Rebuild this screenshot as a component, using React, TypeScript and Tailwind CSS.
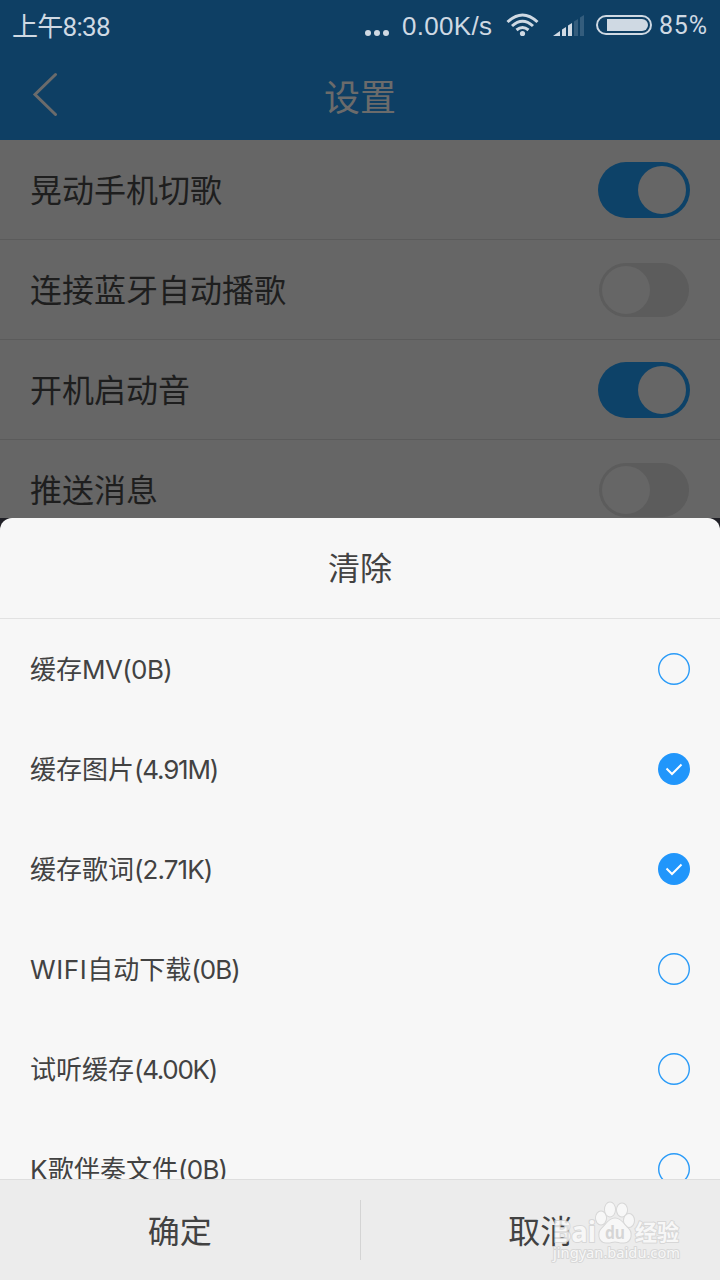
import React, { useState } from "react";

const settings = [
  { label: "晃动手机切歌", on: true },
  { label: "连接蓝牙自动播歌", on: false },
  { label: "开机启动音", on: true },
  { label: "推送消息", on: false },
];

// Latin runs are kept apart from the Chinese ones so they can be tracked on their own
const cacheItems = [
  { id: "mv", parts: ["", "缓存", "MV(0B)"], tracking: "tracking-[-0.6px]", checked: false },
  { id: "image", parts: ["", "缓存图片", "(4.91M)"], tracking: "tracking-[-1.2px]", checked: true },
  { id: "lyric", parts: ["", "缓存歌词", "(2.71K)"], tracking: "tracking-[-0.9px]", checked: true },
  { id: "wifi", parts: ["WIFI", "自动下载", "(0B)"], tracking: "tracking-[-1px]", checked: false },
  { id: "listen", parts: ["", "试听缓存", "(4.00K)"], tracking: "tracking-[-1.3px]", checked: false },
  { id: "karaoke", parts: ["K", "歌伴奏文件", "(0B)"], tracking: "tracking-[-0.8px]", checked: false },
];

function StatusBar() {
  return (
    <div className="flex h-[50px] items-center text-[26px] leading-[50px] text-[#cfd9e3]">
      <span className="ml-3 flex-1 whitespace-nowrap pt-[3px] font-['Roboto','Noto_Sans_CJK_SC',sans-serif] text-[26px] tracking-[-0.7px]">上午8:38</span>
      <svg className="mr-[13px] mt-4" width="24" height="8" viewBox="0 0 24 8" fill="currentColor">
        <circle cx="3" cy="4" r="3" />
        <circle cx="12" cy="4" r="3" />
        <circle cx="21" cy="4" r="3" />
      </svg>
      <span className="w-[91px] whitespace-nowrap pt-0.5 font-['Liberation_Sans',sans-serif] tracking-[0.3px]">0.00K/s</span>
      <svg className="ml-[13px]" width="33" height="24" viewBox="0 0 33 24" fill="none" stroke="currentColor" strokeWidth="3">
        <path d="M1.5 9 Q16.5 -5 31.5 9" />
        <path d="M6 13 Q16.5 3.5 27 13" />
        <path d="M10.5 17 Q16.5 12 22.5 17" />
        <circle cx="16.5" cy="20.5" r="2.6" fill="currentColor" stroke="none" />
      </svg>
      <svg className="ml-[14px] mt-0.5" width="32" height="22" viewBox="0 0 32 22" fill="currentColor">
        <path d="M0 21 L7 16 V21 Z" />
        <path d="M9 14.5 L13 12 V21 H9 Z" />
        <path d="M15 10.5 L19 8 V21 H15 Z" />
        <path d="M21 6.5 L25 4 V21 H21 Z" opacity="0.2" />
        <path d="M27 2.5 L31 0 V21 H27 Z" opacity="0.2" />
      </svg>
      <svg className="ml-[11px]" width="56" height="20" viewBox="0 0 56 20">
        <rect x="1" y="1" width="54" height="18" rx="9" fill="none" stroke="currentColor" strokeWidth="2" />
        <path d="M11 4 H46 A6 6 0 0 1 46 16 H11 Z" fill="currentColor" />
      </svg>
      <span className="ml-[7px] w-[61px] whitespace-nowrap pt-0.5 font-['Roboto',sans-serif] text-[25px] tracking-[0.8px]">85%</span>
    </div>
  );
}

function Toggle({ on }: { on: boolean }) {
  if (on) {
    return (
      <div className="flex h-14 w-[92px] items-center justify-end rounded-full bg-[#0d4268] pr-1">
        <div className="h-12 w-12 rounded-full bg-[#666]" />
      </div>
    );
  }
  return (
    <div className="mr-px flex h-[54px] w-[90px] items-center rounded-full bg-[#5c5c5c] pl-[3px]">
      <div className="h-12 w-12 rounded-full bg-[#666]" />
    </div>
  );
}

function RadioMark({ checked }: { checked: boolean }) {
  return (
    <svg width="32" height="32" viewBox="0 0 32 32" fill="none">
      {checked ? (
        <>
          <circle cx="16" cy="16" r="16" fill="#2196fb" />
          <path d="M8.5 15.5 L14 21 L23.5 11.5" stroke="#fff" strokeWidth="2" />
        </>
      ) : (
        <circle cx="16" cy="16" r="15.3" stroke="#2a9bf8" strokeWidth="1.4" />
      )}
    </svg>
  );
}

function Watermark() {
  return (
    <svg
      className="pointer-events-none absolute right-[36px] top-[20px]"
      width="134"
      height="66"
      viewBox="0 0 134 66"
      fill="#fafafa"
      stroke="#d4d4d4"
      strokeWidth="2"
      strokeLinejoin="round"
      opacity="0.85"
      paintOrder="stroke"
      fontFamily="'Noto Sans', 'Noto Sans CJK SC', sans-serif"
    >
      <text x="3" y="42" fontSize="28" fontWeight="700" textLength="43" lengthAdjust="spacingAndGlyphs">Bai</text>
      <ellipse cx="51" cy="18" rx="5" ry="6.5" />
      <ellipse cx="60" cy="9.5" rx="5" ry="7" />
      <ellipse cx="72" cy="10" rx="5" ry="6.5" />
      <ellipse cx="79" cy="20.5" rx="5" ry="6.5" />
      <path d="M65 18.5 C59 18.5 57 24 52 28.5 C48 32 48 42 56 42.5 C60 43 62 41.5 65 41.5 C68 41.5 70 43 74 42.5 C82 42 82 32 78 28.5 C73 24 71 18.5 65 18.5 Z" />
      <text x="55" y="39" fontSize="18" fontWeight="700" fill="#d2d2d2" stroke="none" textLength="20" lengthAdjust="spacingAndGlyphs">du</text>
      <text x="85" y="39.5" fontSize="22" fontWeight="700" textLength="44" lengthAdjust="spacingAndGlyphs">经验</text>
      <text x="3" y="58" fontSize="14" textLength="127" lengthAdjust="spacingAndGlyphs">jingyan.baidu.com</text>
    </svg>
  );
}

export default function App() {
  const [items, setItems] = useState(cacheItems);

  const toggleItem = (id: string) => {
    setItems(items.map((item) => (item.id === id ? { ...item, checked: !item.checked } : item)));
  };

  return (
    <div className="flex h-[1280px] w-[720px] flex-col overflow-hidden bg-[#666] font-['Inter','Noto_Sans_CJK_SC',sans-serif]">
      {/* Header */}
      <header className="h-[140px] shrink-0 bg-[#0e3f64]">
        <StatusBar />
        <div className="grid h-[90px] grid-cols-3 items-center text-[#6b6b6b]">
          <svg className="mb-0.5 ml-8" width="26" height="44" viewBox="0 0 26 44" fill="none" stroke="currentColor" strokeWidth="3" strokeLinecap="round">
            <path d="M23.5 2.5 L3 22.5 L23.5 42.5" />
          </svg>
          <h1 className="text-center font-['Noto_Sans_CJK_SC',sans-serif] text-[36px] leading-[88px]">设置</h1>
        </div>
      </header>

      {/* Settings behind the sheet */}
      <main className="h-[378px] shrink-0 overflow-hidden">
        {settings.map((row) => (
          <div key={row.label} className="flex h-[100px] items-center justify-between border-b border-[#5b5b5b] px-[30px]">
            <span className="pb-[3px] font-['Noto_Sans_CJK_SC',sans-serif] text-[32px] text-[#1e1e1e]">{row.label}</span>
            <Toggle on={row.on} />
          </div>
        ))}
      </main>

      {/* Clear cache sheet */}
      <section className="h-[762px] shrink-0 bg-[#202026]">
        <div className="flex h-full flex-col overflow-hidden rounded-t-xl bg-[#f7f7f7] text-[#424242]">
          <h2 className="h-[101px] shrink-0 border-b border-[#e2e2e2] text-center font-['Noto_Sans_CJK_SC',sans-serif] text-[32px] leading-[97px]">清除</h2>
          <div className="h-[560px] shrink-0 overflow-hidden">
            {items.map((item) => (
              <div
                key={item.id}
                onClick={() => toggleItem(item.id)}
                className="flex h-[100px] items-center justify-between px-[30px] text-[26px]"
              >
                <span className="whitespace-nowrap pt-px">
                  <span className="tracking-[0.6px]">{item.parts[0]}</span>
                  {item.parts[1]}
                  <span className={item.tracking}>{item.parts[2]}</span>
                </span>
                <RadioMark checked={item.checked} />
              </div>
            ))}
          </div>
          <div className="relative flex h-[101px] shrink-0 items-center border-t border-[#dedede] bg-[#ececec] font-['Noto_Sans_CJK_SC',sans-serif] text-[32px]">
            <button className="h-[100px] flex-1 pb-0.5">确定</button>
            <div className="h-[60px] w-px bg-[#d4d4d4]" />
            <button className="h-[100px] flex-1 pb-0.5">取消</button>
            <Watermark />
          </div>
        </div>
      </section>
    </div>
  );
}
